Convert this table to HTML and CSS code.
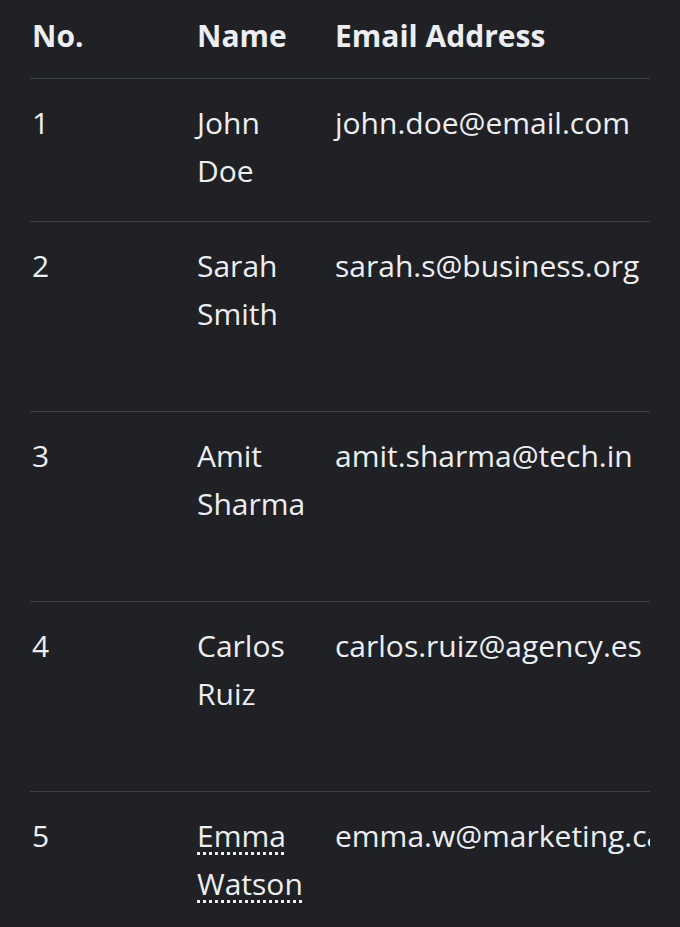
FILE: index.html
```html
<!DOCTYPE html>
<html>
<head>
    <title>Contacts</title>
    <link rel="stylesheet" href="styles.css">
</head>
<body>
    <div class="table-wrap">
        <table id="contactTable">
            <colgroup>
                <col class="col-no">
                <col class="col-name">
                <col class="col-email">
            </colgroup>
            <thead>
                <tr>
                    <th>No.</th>
                    <th>Name</th>
                    <th>Email Address</th>
                </tr>
            </thead>
            <tbody>
                <tr>
                    <td>1</td>
                    <td>John Doe</td>
                    <td>john.doe@email.com</td>
                </tr>
                <tr class="tall">
                    <td>2</td>
                    <td>Sarah Smith</td>
                    <td>sarah.s@business.org</td>
                </tr>
                <tr class="tall">
                    <td>3</td>
                    <td>Amit Sharma</td>
                    <td>amit.sharma@tech.in</td>
                </tr>
                <tr class="tall">
                    <td>4</td>
                    <td>Carlos Ruiz</td>
                    <td>carlos.ruiz@agency.es</td>
                </tr>
                <tr class="tall">
                    <td>5</td>
                    <td><span class="flagged">Emma</span> <span class="flagged">Watson</span></td>
                    <td>emma.w@marketing.ca</td>
                </tr>
            </tbody>
        </table>
    </div>
</body>
</html>
```

FILE: styles.css
```css
body {
    margin: 0;
    background-color: #202124;
    color: #eceef2;
    font-family: "Open Sans", Roboto, sans-serif;
}

.table-wrap {
    margin: 0 30px;
    overflow: hidden;
}

table {
    width: 100%;
    table-layout: fixed;
    border-collapse: collapse;
}

.col-no {
    width: 165px;
}

.col-name {
    width: 138px;
}

th, td {
    text-align: left;
    vertical-align: top;
    font-size: 30px;
    line-height: 48px;
    padding: 20px 30px 26px 2px;
    border-bottom: 1px solid #3c4043;
}

th {
    font-weight: 700;
    padding: 12px 0 18px 2px;
}

td:nth-child(2) {
    padding-right: 20px;
}

td:last-child {
    white-space: nowrap;
    padding-right: 0;
}

.tall td {
    padding-bottom: 73px;
}

.flagged {
    text-decoration: underline dotted;
    text-decoration-thickness: 3px;
    text-underline-offset: 5px;
}
```
